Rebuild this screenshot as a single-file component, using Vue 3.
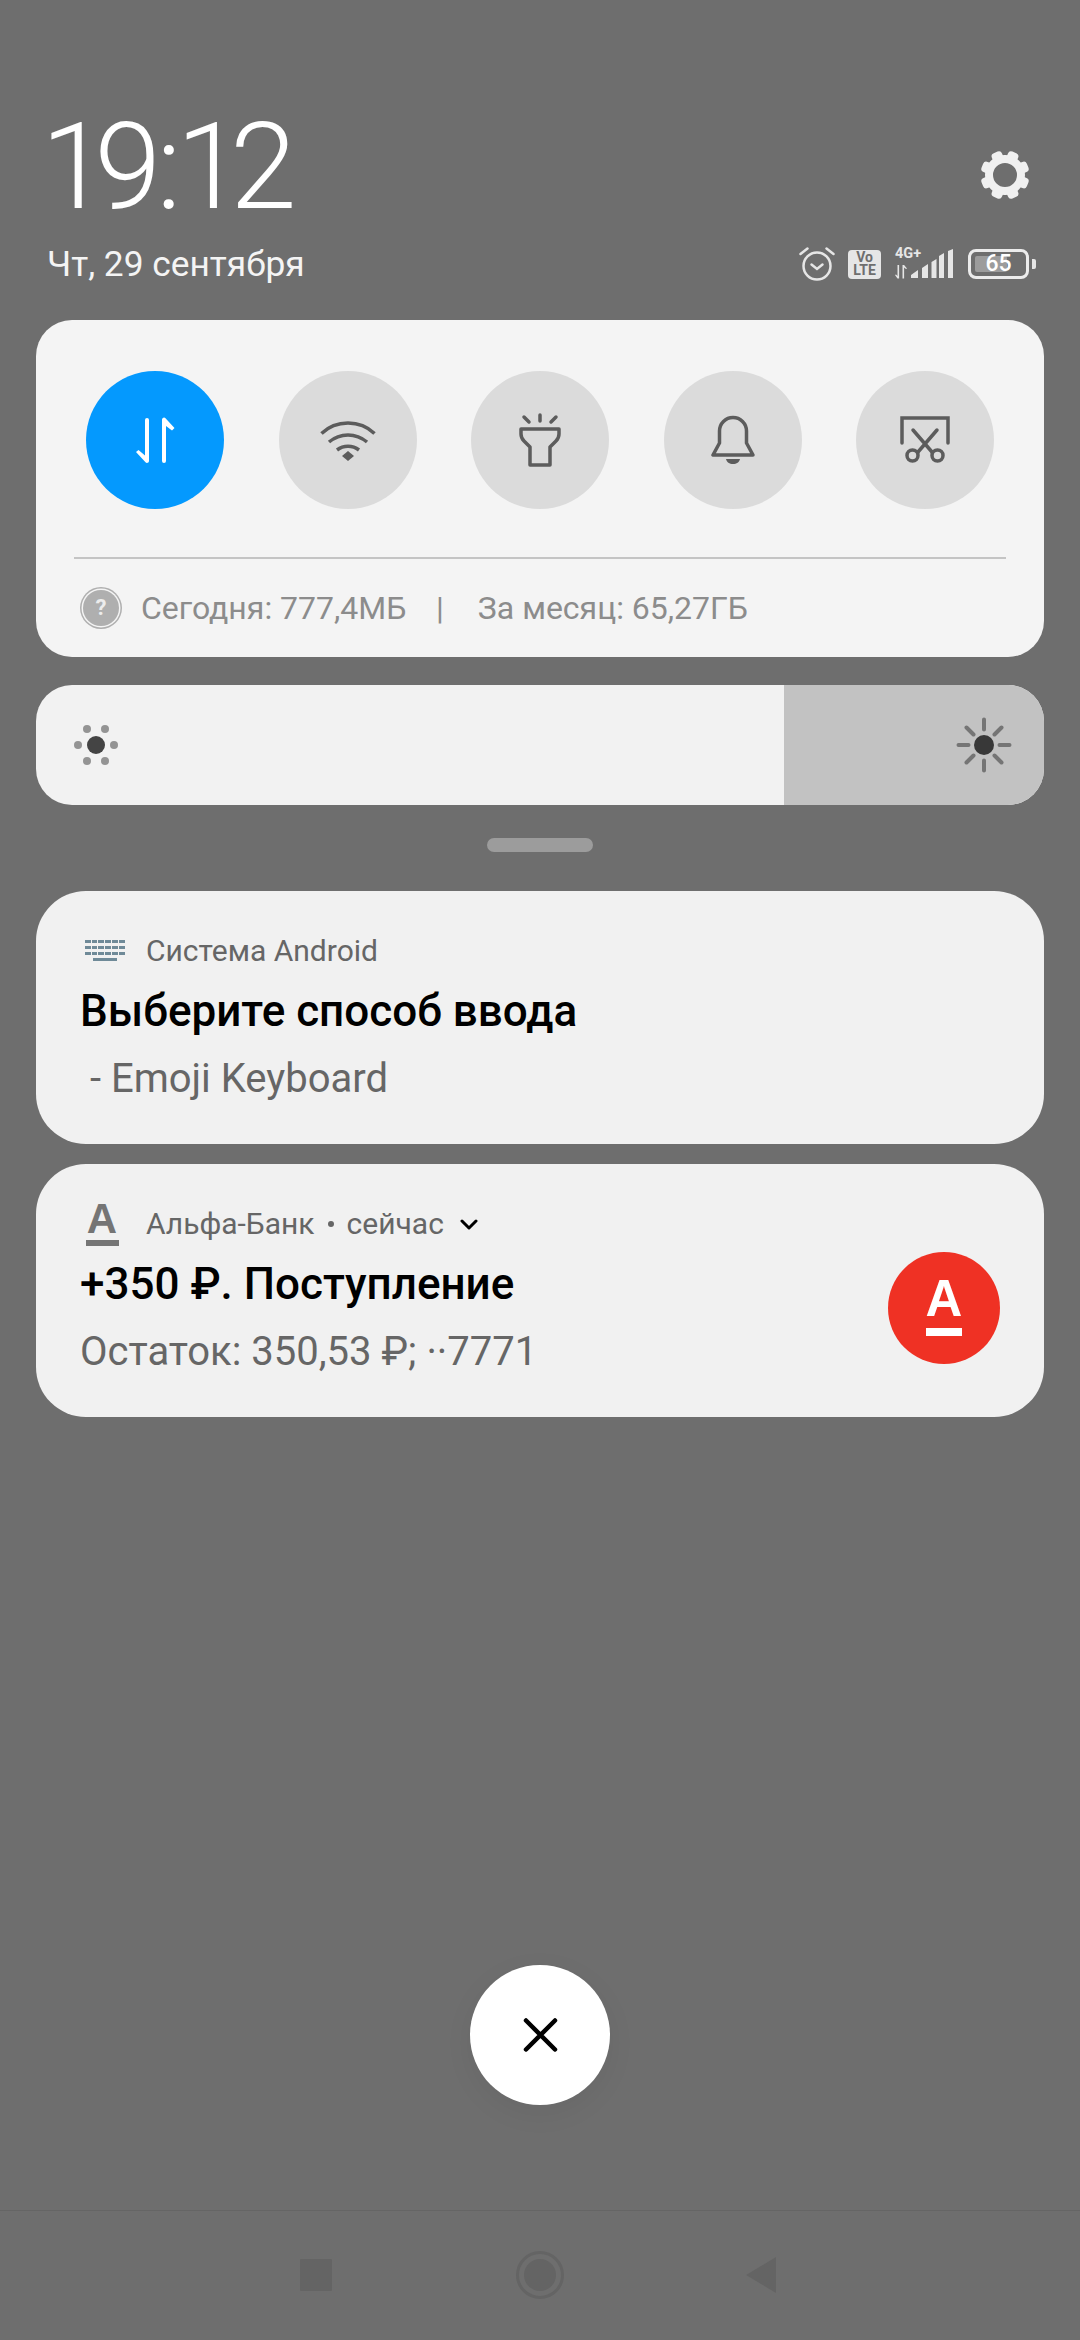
<script setup>
const toggles = ['data', 'wifi', 'torch', 'bell', 'shot']
const teeth = [22.5, 67.5, 112.5, 157.5, 202.5, 247.5, 292.5, 337.5]
</script>

<template>
  <div class="screen">
    <header class="head">
      <div class="head-left">
        <div class="clock">19<span class="colon">:</span>12</div>
        <div class="date">Чт, 29 сентября</div>
      </div>
      <div class="head-right">
        <svg class="gear" width="50" height="50" viewBox="-25 -25 50 50">
          <circle r="16" fill="none" stroke="#f0f0f0" stroke-width="8"/>
          <rect v-for="a in teeth" :key="a" x="-5.500" y="-24.500" width="11" height="10" rx="3.500" fill="#f0f0f0" :transform="`rotate(${a})`"/>
        </svg>
        <div class="status">
          <svg class="alarm" width="36" height="36" viewBox="0 0 36 36" fill="none" stroke="#e6e6e6" stroke-linecap="round">
            <circle cx="18" cy="20" r="13.500" stroke-width="2.500"/>
            <path d="M12.500 18.500 18 23l5.500-4.500" stroke-width="2.500"/>
            <path d="M1.500 8 8.500 2.500M34.500 8 27.500 2.500" stroke-width="2.500"/>
          </svg>
          <div class="volte"><span>Vo</span><span>LTE</span></div>
          <div class="signal">
            <span class="g4">4G+</span>
            <svg class="arrows" width="12" height="14" viewBox="0 0 12 14">
              <path fill="#e6e6e6" d="M2.500 0h1.600v13.500H2.500L0 10l1-.5 1.500 1.500zM7.500 13.500V0h1.600L12 3.500l-1 .5-1.900-1.500v11z"/>
            </svg>
            <svg class="bars" width="42" height="30" viewBox="0 0 42 30">
              <path fill="#e6e6e6" d="M0 29v-3L7 21v8zM11 29V19l6-4v14zM20.500 29V13l5-3v19zM28 29V7l5-3v25zM37 29V2l5-2v29z"/>
            </svg>
          </div>
          <div class="battery">
            <div class="batt-body">
              <div class="batt-fill"></div>
              <span class="batt-num">65</span>
            </div>
            <div class="batt-tip"></div>
          </div>
        </div>
      </div>
    </header>

    <section class="panel">
      <div class="toggles">
        <div v-for="t in toggles" :key="t" class="toggle" :class="{ on: t === 'data' }">
          <svg v-if="t === 'data'" width="48" height="48" viewBox="0 0 48 48" fill="#fff">
            <path d="M14 4a2 2 0 0 1 4 0v41a2 2 0 0 1-3.500 1.300L5 36l2.500-2 6.500 5.500z"/>
            <path d="M31 45V3.500a2 2 0 0 1 3.500-1.300L43.500 12l-2.500 2.500-6-4.500v35a2 2 0 0 1-4 0z"/>
          </svg>
          <svg v-else-if="t === 'wifi'" width="58" height="44" viewBox="0 0 58 44" fill="none" stroke="#5c5c5c" stroke-width="3.500">
            <path d="M2.500 15.500C17 1.500 41 1.500 55.500 15.500M10 24c11-9.500 27-9.500 38 0M18 32c6.500-5 15.500-5 22 0"/>
            <path fill="#5c5c5c" stroke="none" d="M29 33l6 5-6 5-6-5z"/>
          </svg>
          <svg v-else-if="t === 'torch'" width="44" height="54" viewBox="0 0 44 54" fill="none" stroke="#5c5c5c" stroke-width="3.500" stroke-linecap="round" stroke-linejoin="round">
            <path d="M22 2v6M6 4l5 5M38 4l-5 5"/>
            <path d="M3 16h38v5c0 3-1 5-3 7l-6 6v18H12V34l-6-6c-2-2-3-4-3-7z"/>
          </svg>
          <svg v-else-if="t === 'bell'" width="44" height="50" viewBox="0 0 44 50" fill="none" stroke="#5c5c5c" stroke-width="3.500" stroke-linejoin="round" stroke-linecap="round">
            <path d="M2 40h40L35.500 28V16a13.500 13.500 0 0 0-27 0v12z"/>
            <path fill="#5c5c5c" stroke="none" d="M15 44h14c-.5 3-3.500 5-7 5s-6.500-2-7-5z"/>
          </svg>
          <svg v-else width="50" height="48" viewBox="0 0 50 48" fill="none" stroke="#5c5c5c" stroke-width="3.500" stroke-linecap="round">
            <path d="M2 27V2h46v25" stroke-linejoin="miter"/>
            <path d="M13 14l19 22M37 14L18 36"/>
            <circle cx="12.500" cy="39.500" r="5.500"/>
            <circle cx="37.500" cy="39.500" r="5.500"/>
          </svg>
        </div>
      </div>
      <div class="divider"></div>
      <div class="usage">
        <span class="help">?</span>
        <span class="u1">Сегодня: 777,4МБ</span>
        <span class="sep">|</span>
        <span>За месяц: 65,27ГБ</span>
      </div>
    </section>

    <section class="bright">
      <div class="bright-rest"></div>
      <svg class="sun-l" width="46" height="42" viewBox="0 0 46 42">
        <circle cx="23" cy="21" r="9" fill="#444"/>
        <g fill="#949494">
          <circle cx="14" cy="5" r="4"/><circle cx="32" cy="5" r="4"/>
          <circle cx="5" cy="21" r="4"/><circle cx="41" cy="21" r="4"/>
          <circle cx="14" cy="37" r="4"/><circle cx="32" cy="37" r="4"/>
        </g>
      </svg>
      <svg class="sun-r" width="56" height="56" viewBox="0 0 56 56">
        <circle cx="28" cy="28" r="10" fill="#383838"/>
        <path stroke="#757575" stroke-width="4" stroke-linecap="round" d="M28 2.500v10M28 43.500v10M2.500 28h10M43.500 28h10M10.500 10.500l7 7M45.500 10.500l-7 7M10.500 45.500l7-7M45.500 45.500l-7-7"/>
      </svg>
    </section>

    <div class="handle"></div>

    <section class="card card-a">
      <div class="app-row">
        <svg class="kbd" width="40" height="22" viewBox="0 0 40 22" fill="#6f8a98">
          <path d="M0 0h40v3H0zM0 6h40v3H0zM0 12h40v3H0zM8 18h24v3H8z"/>
          <path fill="#f1f1f1" d="M6 0h1v15H6zM12 0h1v15h-1zM19 0h1v15h-1zM26 0h1v15h-1zM33 0h1v15h-1z"/>
        </svg>
        <span class="app">Система Android</span>
      </div>
      <div class="title">Выберите способ ввода</div>
      <div class="body">&nbsp;- Emoji Keyboard</div>
    </section>

    <section class="card card-b">
      <div class="main">
        <div class="app-row">
          <span class="a-logo"><span class="a-letter">А</span><span class="a-bar"></span></span>
          <span class="app">Альфа-Банк</span>
          <span class="dot"></span>
          <span class="app">сейчас</span>
          <svg class="chev" width="18" height="11" viewBox="0 0 18 11" fill="none" stroke="#000" stroke-width="3" stroke-linecap="round" stroke-linejoin="round">
            <path d="M2 2l7 7 7-7"/>
          </svg>
        </div>
        <div class="title">+350 ₽. Поступление</div>
        <div class="body">Остаток: 350,53 ₽; ··7771</div>
      </div>
      <div class="alfa">
        <span class="alfa-letter">А</span>
        <span class="alfa-bar"></span>
      </div>
    </section>

    <div class="spacer"></div>

    <div class="close">
      <svg width="36" height="36" viewBox="0 0 36 36" stroke="#000" stroke-width="4.500" stroke-linecap="round">
        <path d="M4 3.500l29 29M33 3.500l-29 29"/>
      </svg>
    </div>

    <nav class="nav">
      <div class="nav-square"></div>
      <div class="nav-home"><div class="nav-home-in"></div></div>
      <svg class="nav-back" width="31" height="36" viewBox="0 0 31 36">
        <path fill="#646464" d="M31 0v36L1 18z"/>
      </svg>
    </nav>
  </div>
</template>

<style>
html, body { margin: 0; background: #6e6e6e; }
</style>

<style scoped>
.screen {
  width: 1080px;
  height: 2340px;
  background: #6e6e6e;
  font-family: Roboto, "Noto Sans", sans-serif;
  display: flex;
  flex-direction: column;
  align-items: center;
  overflow: hidden;
}
.head {
  width: 1080px;
  box-sizing: border-box;
  padding: 106px 44px 0 48px;
  height: 320px;
  flex: none;
  display: flex;
  justify-content: space-between;
}
.clock {
  color: #fff;
  font-family: Roboto, sans-serif;
  font-weight: 300;
  font-size: 120px;
  line-height: 122px;
  margin-left: -7px;
  letter-spacing: -13px;
  white-space: nowrap;
}
.colon { margin: 0 8px; }
.date {
  color: #f4f4f4;
  font-size: 35.300px;
  line-height: 40px;
  margin-top: 16px;
  margin-left: -1px;
}
.head-right {
  display: flex;
  flex-direction: column;
  align-items: flex-end;
}
.gear { margin: 44px 6px 0 0; }
.status {
  display: flex;
  align-items: center;
  margin-top: 46px;
  margin-right: 0;
}
.alarm { margin-right: 13px; }
.volte {
  width: 33px;
  height: 29px;
  box-sizing: border-box;
  background: #e6e6e6;
  border-radius: 4px;
  color: #6e6e6e;
  font-size: 14px;
  font-weight: 700;
  line-height: 13px;
  display: flex;
  flex-direction: column;
  align-items: center;
  justify-content: center;
  margin-right: 14px;
}
.signal {
  position: relative;
  width: 58px;
  height: 30px;
  margin-right: 15px;
}
.g4 {
  position: absolute;
  left: 0;
  top: -3px;
  font-size: 14.500px;
  font-weight: 700;
  line-height: 16px;
  color: #e6e6e6;
}
.arrows { position: absolute; left: 0; bottom: 0; }
.bars { position: absolute; right: 0; top: 0; }
.battery { display: flex; align-items: center; gap: 3px; }
.batt-body {
  position: relative;
  width: 61px;
  height: 30px;
  box-sizing: border-box;
  border: 3px solid #ececec;
  border-radius: 8px;
  overflow: hidden;
}
.batt-fill {
  position: absolute;
  left: 4px;
  top: 4px;
  bottom: 4px;
  width: 32px;
  background: #9c9c9c;
  border-radius: 2px;
}
.batt-num {
  position: absolute;
  inset: 0;
  text-align: center;
  color: #fff;
  font-size: 23px;
  font-weight: 500;
  line-height: 24px;
}
.batt-tip {
  width: 4px;
  height: 10px;
  background: #e6e6e6;
  border-radius: 0 2px 2px 0;
}
.panel {
  width: 1008px;
  height: 337px;
  box-sizing: border-box;
  flex: none;
  background: #f4f4f4;
  border-radius: 36px;
  padding: 51px 50px 0;
}
.toggles {
  display: flex;
  justify-content: space-between;
}
.toggle {
  width: 138px;
  height: 138px;
  border-radius: 50%;
  background: #dbdbdb;
  display: flex;
  align-items: center;
  justify-content: center;
}
.toggle.on { background: #0499fe; }
.divider {
  height: 2px;
  background: #c4c4c4;
  margin: 48px -12px 0;
}
.usage {
  display: flex;
  align-items: center;
  margin: 28px 0 0 -3px;
  color: #8c8c8c;
  font-size: 32px;
  line-height: 42px;
}
.help {
  width: 36px;
  height: 36px;
  box-sizing: border-box;
  flex: none;
  border-radius: 50%;
  background: #afafaf;
  box-shadow: 0 0 0 1.500px #f4f4f4, 0 0 0 3px #afafaf;
  margin: 0 22px 0 0;
  color: #ececec;
  font-size: 22px;
  font-weight: 700;
  line-height: 36px;
  text-align: center;
}
.u1 { width: 295px; white-space: nowrap; }
.sep { margin-right: 34px; }
.bright {
  position: relative;
  width: 1008px;
  height: 120px;
  margin-top: 28px;
  background: #f2f2f2;
  border-radius: 36px;
  overflow: hidden;
  flex: none;
}
.bright-rest {
  position: absolute;
  top: 0;
  right: 0;
  bottom: 0;
  width: 260px;
  background: #c2c2c2;
}
.sun-l { position: absolute; left: 37px; top: 39px; }
.sun-r { position: absolute; right: 32px; top: 32px; }
.handle {
  width: 106px;
  height: 14px;
  margin-top: 33px;
  border-radius: 7px;
  background: #9c9c9c;
  flex: none;
}
.card {
  width: 1008px;
  height: 253px;
  box-sizing: border-box;
  flex: none;
  background: #f1f1f1;
  border-radius: 50px;
  padding: 43px 44px 0;
}
.card-a { margin-top: 39px; }
.card-b {
  margin-top: 20px;
  display: flex;
  justify-content: space-between;
}
.app-row {
  display: flex;
  align-items: center;
  height: 34px;
}
.kbd { margin: 0 21px 0 5px; flex: none; }
.app {
  color: #666;
  font-size: 30px;
  line-height: 34px;
}
.title {
  color: #000;
  font-size: 44px;
  font-weight: 500;
  line-height: 48px;
  margin-top: 19px;
}
.body {
  color: #666;
  font-size: 40px;
  line-height: 48px;
  margin-top: 20px;
}
.a-logo {
  width: 34px;
  margin: 0 27px 0 5px;
  display: flex;
  flex-direction: column;
  align-items: center;
  flex: none;
}
.a-letter {
  color: #757575;
  font-size: 42px;
  font-weight: 700;
  line-height: 32px;
  font-family: "Liberation Sans", sans-serif;
}
.a-bar {
  width: 33px;
  height: 6px;
  margin-top: 5px;
  background: #757575;
}
.dot {
  width: 6px;
  height: 6px;
  border-radius: 50%;
  background: #666;
  margin: 0 13px 0 13px;
}
.chev { margin-left: 16px; }
.alfa {
  width: 112px;
  height: 112px;
  border-radius: 50%;
  background: #ef3124;
  margin: 45px 0 0 0;
  display: flex;
  flex-direction: column;
  align-items: center;
  justify-content: center;
}
.alfa-letter {
  color: #fff;
  font-family: "Liberation Sans", sans-serif;
  font-weight: 700;
  font-size: 51px;
  line-height: 38px;
}
.alfa-bar {
  width: 36px;
  height: 8px;
  background: #fff;
  margin-top: 10px;
}
.spacer { flex: 1; }
.close {
  width: 140px;
  height: 140px;
  flex: none;
  border-radius: 50%;
  background: #fff;
  box-shadow: 0 8px 30px rgba(0, 0, 0, 0.05);
  display: flex;
  align-items: center;
  justify-content: center;
  margin-bottom: 105px;
}
.nav {
  width: 1080px;
  height: 130px;
  box-sizing: border-box;
  flex: none;
  border-top: 1px solid #656565;
  position: relative;
}
.nav-square {
  position: absolute;
  left: 300px;
  top: 48px;
  width: 32px;
  height: 32px;
  background: #646464;
  border-radius: 1px;
}
.nav-home {
  position: absolute;
  left: 516px;
  top: 40px;
  width: 48px;
  height: 48px;
  box-sizing: border-box;
  border: 3px solid #646464;
  border-radius: 50%;
  display: flex;
  align-items: center;
  justify-content: center;
}
.nav-home-in {
  width: 32px;
  height: 32px;
  border-radius: 50%;
  background: #646464;
}
.nav-back { position: absolute; left: 745px; top: 46px; }
</style>
